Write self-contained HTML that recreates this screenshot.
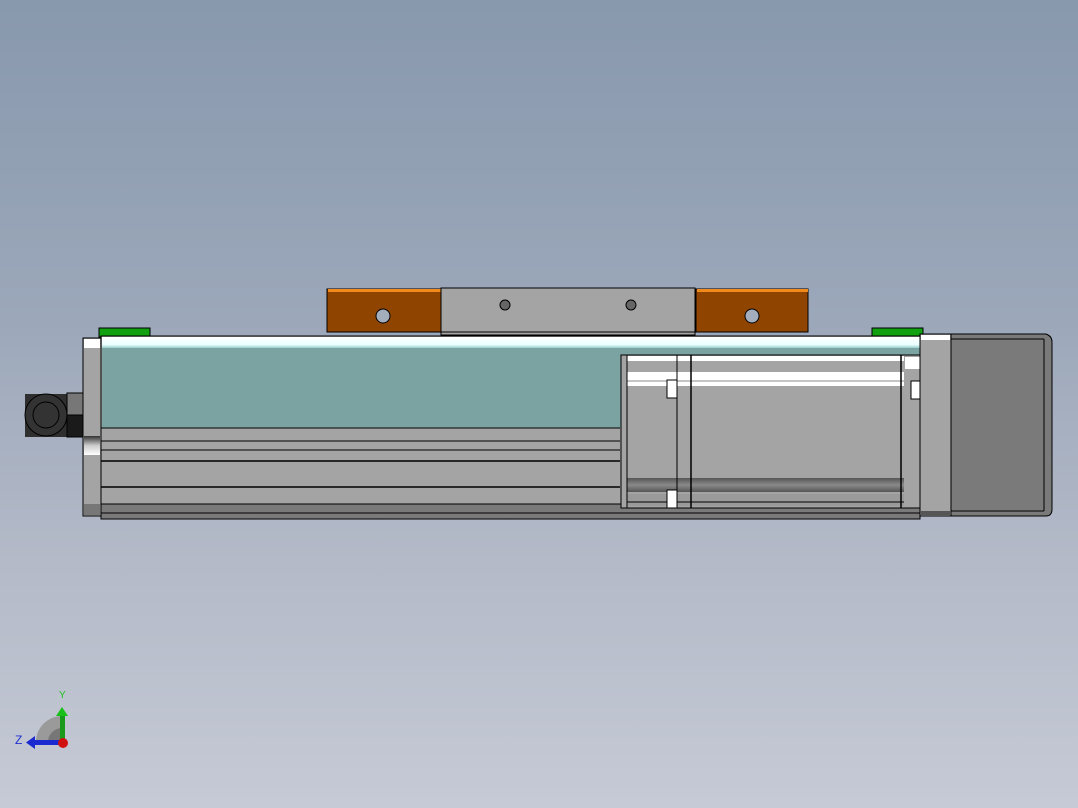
<!DOCTYPE html>
<html><head><meta charset="utf-8"><style>
html,body{margin:0;padding:0;width:1078px;height:808px;overflow:hidden}
body{background:linear-gradient(#8898ad 0%,#9ca8ba 40%,#b4bac8 70%,#c6cad6 100%)}
svg{position:absolute;left:0;top:0}
</style></head><body>
<svg width="1078" height="808" viewBox="0 0 1078 808" font-family="Liberation Sans, sans-serif">
<defs>
<linearGradient id="band" x1="0" y1="0" x2="0" y2="1"><stop offset="0" stop-color="#333"/><stop offset=".5" stop-color="#ccc"/><stop offset="1" stop-color="#fff"/></linearGradient>
<linearGradient id="rod" x1="0" y1="0" x2="0" y2="1"><stop offset="0" stop-color="#555"/><stop offset=".5" stop-color="#8a8a8a"/><stop offset="1" stop-color="#555"/></linearGradient>
<linearGradient id="top" x1="0" y1="0" x2="0" y2="1"><stop offset="0" stop-color="#fff"/><stop offset=".7" stop-color="#eaffff"/><stop offset="1" stop-color="#9cc"/></linearGradient>
</defs>
<g stroke="#000" stroke-width="1">
<!-- green clips -->
<rect x="99" y="328" width="51" height="9" fill="#10a010"/>
<rect x="872" y="328" width="51" height="9" fill="#10a010"/>
<!-- orange blocks -->
<rect x="327" y="289" width="114" height="43" fill="#8f4500"/>
<rect x="328" y="289" width="113" height="3" fill="#f08a1c" stroke="none"/>
<circle cx="383" cy="316" r="7" fill="#a3adbb"/>
<rect x="696" y="289" width="112" height="43" fill="#8f4500"/>
<rect x="697" y="289" width="111" height="3" fill="#f08a1c" stroke="none"/>
<circle cx="752" cy="316" r="7" fill="#a3adbb"/>
<!-- carriage -->
<rect x="441" y="288" width="254" height="47" fill="#a4a4a4"/>
<line x1="441" y1="332" x2="695" y2="332"/>
<circle cx="505" cy="305" r="5" fill="#666"/>
<circle cx="631" cy="305" r="5" fill="#666"/>
<!-- connector -->
<rect x="25" y="394" width="42" height="43" fill="#2f2f2f" stroke="none"/>
<circle cx="46" cy="415" r="21" fill="#333"/>
<circle cx="46" cy="415" r="13" fill="#333"/>
<rect x="67" y="393" width="16" height="22" fill="#777"/>
<rect x="67" y="415" width="16" height="22" fill="#1a1a1a"/>
<!-- end cap -->
<rect x="83" y="338" width="18" height="178" fill="#a4a4a4"/>
<rect x="84" y="339" width="16" height="9" fill="#fff" stroke="none"/>
<rect x="84" y="436" width="16" height="19" fill="url(#band)" stroke="none"/>
<rect x="84" y="504" width="16" height="11" fill="#777" stroke="none"/>
<!-- body -->
<rect x="101" y="336" width="819" height="183" fill="#a4a4a4"/>
<rect x="102" y="337" width="818" height="11" fill="url(#top)" stroke="none"/>
<rect x="102" y="348" width="818" height="80" fill="#7aa3a2" stroke="none"/>
<line x1="101" y1="428" x2="620" y2="428"/>
<line x1="101" y1="441" x2="620" y2="441"/>
<line x1="101" y1="450" x2="620" y2="450"/>
<line x1="101" y1="461" x2="620" y2="461" stroke-width="1.5"/>
<line x1="101" y1="487" x2="620" y2="487" stroke-width="1.5"/>
<rect x="101" y="504" width="819" height="15" fill="#7a7a7a"/>
<line x1="101" y1="513" x2="920" y2="513"/>
<!-- motor housing inner -->
<rect x="621" y="355" width="299" height="153" fill="#a4a4a4"/>
<rect x="627" y="356" width="277" height="5" fill="#fff" stroke="none"/>
<rect x="627" y="372" width="277" height="14" fill="#fff" stroke="none"/>
<line x1="627" y1="381" x2="904" y2="381" stroke="#888"/>
<rect x="905" y="357" width="15" height="12" fill="#fff" stroke="none"/>
<rect x="627" y="478" width="277" height="14" fill="url(#rod)" stroke="none"/>
<rect x="627" y="494" width="277" height="12" fill="#9a9a9a" stroke="none"/>
<line x1="627" y1="502" x2="904" y2="502"/>
<line x1="627" y1="355" x2="627" y2="508"/>
<line x1="677" y1="355" x2="677" y2="508"/>
<line x1="691" y1="355" x2="691" y2="508" stroke-width="1.5"/>
<line x1="901" y1="355" x2="901" y2="508" stroke-width="1.5"/>
<rect x="667" y="380" width="10" height="18" fill="#fff"/>
<rect x="667" y="490" width="10" height="18" fill="#fff"/>
<rect x="911" y="381" width="9" height="18" fill="#fff"/>
<!-- flange + motor -->
<rect x="920" y="334" width="31" height="182" fill="#a4a4a4"/>
<rect x="921" y="335" width="29" height="5" fill="#fff" stroke="none"/>
<rect x="921" y="511" width="29" height="5" fill="#555" stroke="none"/>
<path d="M951 334 H1046 Q1052 336 1052 342 V509 Q1052 516 1046 516 H951 Z" fill="#7a7a7a"/>
<line x1="951" y1="339" x2="1044" y2="339"/>
<line x1="951" y1="511" x2="1044" y2="511"/>
<line x1="1044" y1="339" x2="1044" y2="511"/>
</g>
<!-- triad -->
<path d="M36 742 A26 26 0 0 1 62 716 V742 Z" fill="#9a9a9a"/>
<path d="M48 742 A14 14 0 0 1 62 728 V742 Z" fill="#777"/>
<rect x="60" y="715" width="5" height="27" fill="#1a9a1a"/>
<path d="M56 716 L62 707 L68 716 Z" fill="#1ac01a"/>
<rect x="34" y="740" width="28" height="5" fill="#1a2ad0"/>
<path d="M35 736 L26 742.5 L35 749 Z" fill="#1a2ad0"/>
<circle cx="63" cy="743" r="5" fill="#d01010"/>
<text x="59" y="698" font-size="10" fill="#20c020">Y</text>
<text x="15" y="744" font-size="12" fill="#2030d0">Z</text>
</svg>
</body></html>
